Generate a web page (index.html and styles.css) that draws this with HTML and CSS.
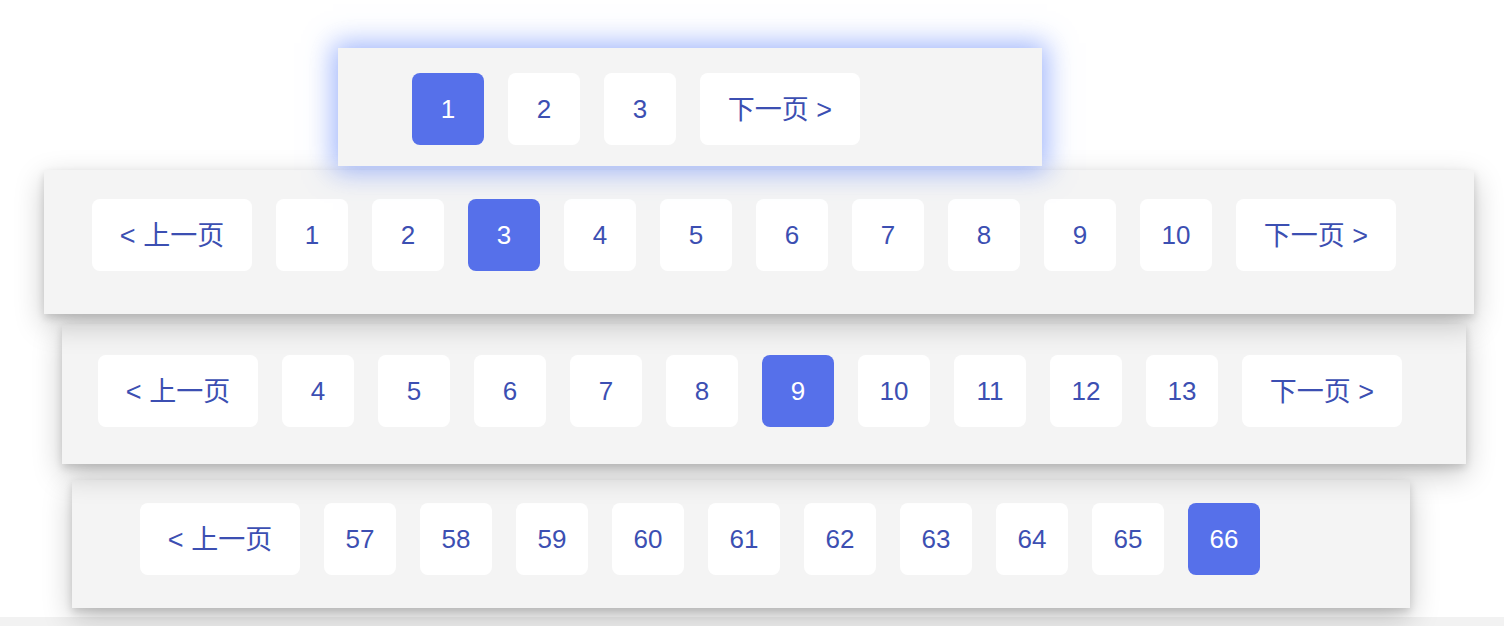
FILE: index.html
```html
<!DOCTYPE html>
<html lang="zh">
<head>
<meta charset="utf-8">
<title>Pagination</title>
<link rel="stylesheet" href="styles.css">
</head>
<body>
<div class="stage">
  <nav class="pager pager-1">
    <span class="btn active">1</span>
    <span class="btn">2</span>
    <span class="btn">3</span>
    <span class="btn wide">下一页 &gt;</span>
  </nav>
  <nav class="pager pager-2">
    <span class="btn wide">&lt; 上一页</span>
    <span class="btn">1</span>
    <span class="btn">2</span>
    <span class="btn active">3</span>
    <span class="btn">4</span>
    <span class="btn">5</span>
    <span class="btn">6</span>
    <span class="btn">7</span>
    <span class="btn">8</span>
    <span class="btn">9</span>
    <span class="btn">10</span>
    <span class="btn wide">下一页 &gt;</span>
  </nav>
  <nav class="pager pager-3">
    <span class="btn wide">&lt; 上一页</span>
    <span class="btn">4</span>
    <span class="btn">5</span>
    <span class="btn">6</span>
    <span class="btn">7</span>
    <span class="btn">8</span>
    <span class="btn active">9</span>
    <span class="btn">10</span>
    <span class="btn">11</span>
    <span class="btn">12</span>
    <span class="btn">13</span>
    <span class="btn wide">下一页 &gt;</span>
  </nav>
  <nav class="pager pager-4">
    <span class="btn wide">&lt; 上一页</span>
    <span class="btn">57</span>
    <span class="btn">58</span>
    <span class="btn">59</span>
    <span class="btn">60</span>
    <span class="btn">61</span>
    <span class="btn">62</span>
    <span class="btn">63</span>
    <span class="btn">64</span>
    <span class="btn">65</span>
    <span class="btn active">66</span>
  </nav>
  <div class="strip"></div>
</div>
</body>
</html>
```

FILE: styles.css
```css
html, body {
  margin: 0;
  padding: 0;
  background: #ffffff;
}
body {
  font-family: "Liberation Sans", "Noto Sans CJK SC", Arial, sans-serif;
  overflow: hidden;
}
.stage {
  display: flex;
  flex-direction: column;
  align-items: flex-start;
}
.pager {
  box-sizing: border-box;
  display: flex;
  align-items: flex-start;
  gap: 24px;
  background: #f4f4f4;
  position: relative;
  box-shadow: 0 10px 28px rgba(0, 0, 0, 0.22), 0 4px 8px rgba(0, 0, 0, 0.14);
}
.pager-1 {
  margin: 48px 0 0 338px;
  width: 704px;
  height: 118px;
  padding: 25px 0 0 74px;
  box-shadow: 0 0 26px 5px rgba(80, 120, 250, 0.55);
  z-index: 4;
}
.pager-2 {
  margin: 4px 0 0 44px;
  width: 1430px;
  height: 144px;
  padding: 29px 0 0 48px;
  z-index: 3;
}
.pager-3 {
  margin: 10px 0 0 62px;
  width: 1404px;
  height: 140px;
  padding: 31px 0 0 36px;
  z-index: 2;
}
.pager-4 {
  margin: 16px 0 0 72px;
  width: 1338px;
  height: 128px;
  padding: 23px 0 0 68px;
  z-index: 1;
}
.btn {
  box-sizing: border-box;
  flex: none;
  width: 72px;
  height: 72px;
  border-radius: 8px;
  background: #ffffff;
  color: #3c4fb2;
  font-size: 26px;
  line-height: 1;
  display: flex;
  align-items: center;
  justify-content: center;
}
.btn.wide {
  width: 160px;
  font-size: 27px;
  padding-top: 3px;
}
.btn.active {
  background: #5670ea;
  color: #ffffff;
}
.strip {
  margin-top: 9px;
  width: 100%;
  height: 20px;
  background: #f2f2f2;
}
```
